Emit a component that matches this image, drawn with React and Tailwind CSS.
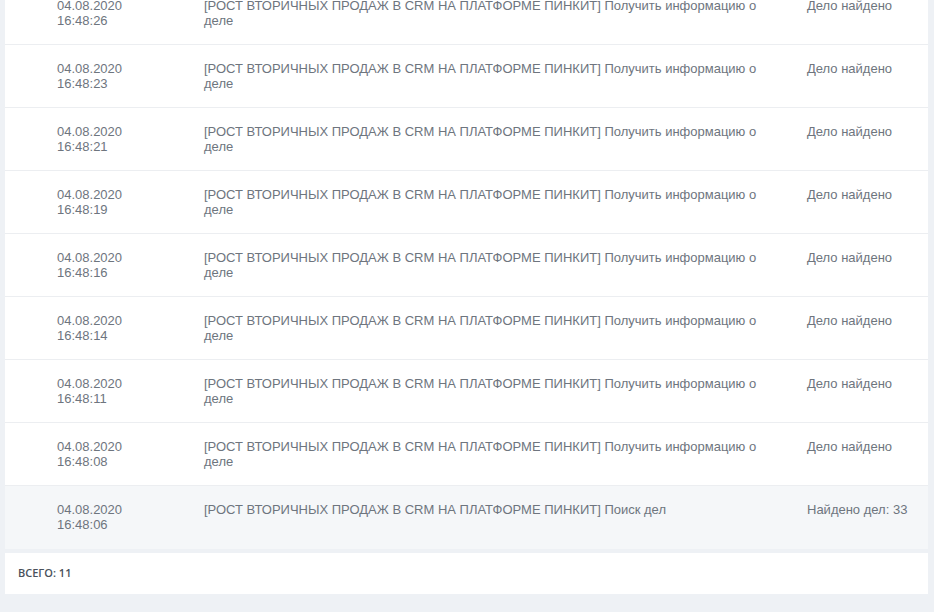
const rows = [
  { date: '04.08.2020', time: '16:48:26', msg: '[РОСТ ВТОРИЧНЫХ ПРОДАЖ В CRM НА ПЛАТФОРМЕ ПИНКИТ] Получить информацию о деле', result: 'Дело найдено' },
  { date: '04.08.2020', time: '16:48:23', msg: '[РОСТ ВТОРИЧНЫХ ПРОДАЖ В CRM НА ПЛАТФОРМЕ ПИНКИТ] Получить информацию о деле', result: 'Дело найдено' },
  { date: '04.08.2020', time: '16:48:21', msg: '[РОСТ ВТОРИЧНЫХ ПРОДАЖ В CRM НА ПЛАТФОРМЕ ПИНКИТ] Получить информацию о деле', result: 'Дело найдено' },
  { date: '04.08.2020', time: '16:48:19', msg: '[РОСТ ВТОРИЧНЫХ ПРОДАЖ В CRM НА ПЛАТФОРМЕ ПИНКИТ] Получить информацию о деле', result: 'Дело найдено' },
  { date: '04.08.2020', time: '16:48:16', msg: '[РОСТ ВТОРИЧНЫХ ПРОДАЖ В CRM НА ПЛАТФОРМЕ ПИНКИТ] Получить информацию о деле', result: 'Дело найдено' },
  { date: '04.08.2020', time: '16:48:14', msg: '[РОСТ ВТОРИЧНЫХ ПРОДАЖ В CRM НА ПЛАТФОРМЕ ПИНКИТ] Получить информацию о деле', result: 'Дело найдено' },
  { date: '04.08.2020', time: '16:48:11', msg: '[РОСТ ВТОРИЧНЫХ ПРОДАЖ В CRM НА ПЛАТФОРМЕ ПИНКИТ] Получить информацию о деле', result: 'Дело найдено' },
  { date: '04.08.2020', time: '16:48:08', msg: '[РОСТ ВТОРИЧНЫХ ПРОДАЖ В CRM НА ПЛАТФОРМЕ ПИНКИТ] Получить информацию о деле', result: 'Дело найдено' },
  { date: '04.08.2020', time: '16:48:06', msg: '[РОСТ ВТОРИЧНЫХ ПРОДАЖ В CRM НА ПЛАТФОРМЕ ПИНКИТ] Поиск дел', result: 'Найдено дел: 33', last: true },
]

function Row({ row }) {
  return (
    <div
      className={
        'flex h-[63px] pt-4 pl-[52px] text-[13px] leading-[15px] text-[#6e757e] ' +
        (row.last ? 'bg-[#f5f7f9]' : 'bg-white border-b border-[#eceef1]')
      }
    >
      <div className="w-[147px] shrink-0">
        <div>{row.date}</div>
        <div>{row.time}</div>
      </div>
      <div className="w-[570px] shrink-0">{row.msg}</div>
      <div className="ml-[33px]">{row.result}</div>
    </div>
  )
}

export default function App() {
  return (
    <div className="min-h-[612px] bg-[#eef1f5] overflow-hidden" style={{ fontFamily: '"Liberation Sans", Arial, sans-serif' }}>
      <div className="ml-[5px] w-[923px] -mt-[18px]">
        {rows.map((r, i) => (
          <Row key={i} row={r} />
        ))}
      </div>
      <div className="ml-[5px] w-[923px] mt-[4px] h-[41px] bg-white flex items-center pl-[13px]">
        <span className="text-[11px] font-semibold text-[#4a515b] uppercase" style={{ fontFamily: '"Open Sans", sans-serif' }}>
          Всего: 11
        </span>
      </div>
    </div>
  )
}
